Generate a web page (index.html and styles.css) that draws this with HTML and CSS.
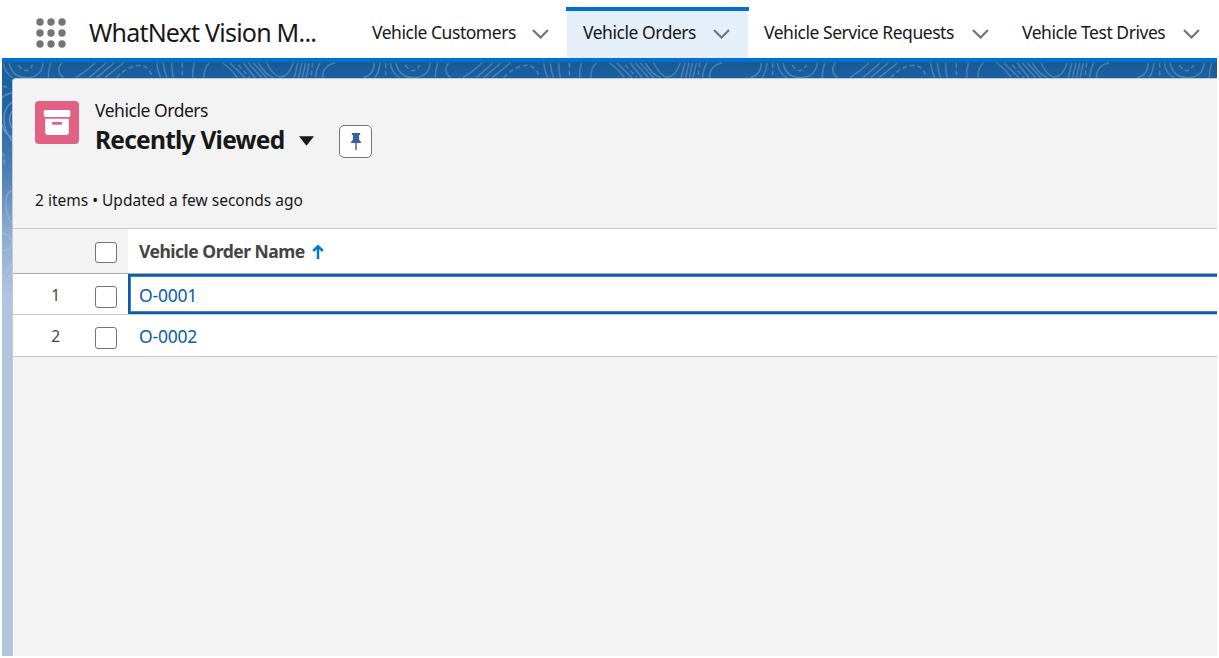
FILE: index.html
```html
<!DOCTYPE html>
<html lang="en">
<head>
<meta charset="utf-8">
<title>Recently Viewed | Vehicle Orders</title>
<link rel="stylesheet" href="styles.css">
</head>
<body>
<div class="app">
  <header class="nav">
    <svg class="waffle" viewBox="0 0 30 30" width="30" height="30">
      <g fill="#747474">
        <circle cx="4" cy="4" r="3.7"/><circle cx="15" cy="4" r="3.7"/><circle cx="26" cy="4" r="3.7"/>
        <circle cx="4" cy="15" r="3.7"/><circle cx="15" cy="15" r="3.7"/><circle cx="26" cy="15" r="3.7"/>
        <circle cx="4" cy="26" r="3.7"/><circle cx="15" cy="26" r="3.7"/><circle cx="26" cy="26" r="3.7"/>
      </g>
    </svg>
    <div class="app-name">WhatNext Vision M...</div>
    <nav class="tabs">
      <a class="tab tab-customers"><span class="tab-label">Vehicle Customers</span><svg class="chev" viewBox="0 0 17 10"><path d="M1 1l7.500 7.500L16 1"/></svg></a>
      <a class="tab tab-orders active"><span class="tab-label">Vehicle Orders</span><svg class="chev" viewBox="0 0 17 10"><path d="M1 1l7.500 7.500L16 1"/></svg></a>
      <a class="tab tab-service"><span class="tab-label">Vehicle Service Requests</span><svg class="chev" viewBox="0 0 17 10"><path d="M1 1l7.500 7.500L16 1"/></svg></a>
      <a class="tab tab-drives"><span class="tab-label">Vehicle Test Drives</span><svg class="chev" viewBox="0 0 17 10"><path d="M1 1l7.500 7.500L16 1"/></svg></a>
    </nav>
  </header>
  <main class="stage">
    <svg class="topo" width="1215" height="260">
      <defs>
        <pattern id="contours" width="1161" height="900" patternUnits="userSpaceOnUse" patternTransform="translate(-2 -7) scale(.33333)">
          <g fill="none" stroke="#8fb4da" stroke-opacity=".4" stroke-width="4.500">
            <path d="M10 24q4 30 28 44M27 24c6 28 24 44 53 44s46-16 50-44M152 24q-7 20-7 44M185 24q-20 22 5 44M228 68q32-20 57-44M268 68l50-44M290 68l52-44M315 68l55-44M470 24q3 26 12 44M490 24q2 26 10 44M515 24q0 24 5 44M583 24q-6 22-5 44M628 24q-18 18-16 44M668 24q26 18 44 44M690 24l45 44M730 24l35 44M745 24l40 44M760 24l40 44M775 24q20 34 45 44M800 24q22 42 43 42t37-42M894 24l-12 44M906 24l-10 44M917 24l-10 44M928 24l-10 44M960 24q-12 18-13 44M1005 24q-38 8-37 44M1122 24q2 34-32 44M1140 24q-2 26-15 44"/>
            <path stroke-dasharray="14 9" d="M55 30q22 34 43 0M350 68q34-36 68-37 28 0 40 37M547 24v44M715 30l35 38M938 24l-5 44M1157 24v44"/>
          </g>
        </pattern>
      </defs>
      <rect width="1215" height="16" fill="url(#contours)"/>
      <g fill="none" stroke="#b5cde8" stroke-opacity=".4" stroke-width="1.500">
        <path d="M0 36q3-4 10-5M10 40Q-3 50 5 71l5 8M10 49q-5 9 0 17M10 75Q2 72 0 62M10 129q-7 1-6 15 1 12 6 17M0 171q9 1 10 9-1 9-10 9M10 202Q3 212 0 216M10 211L0 226M10 222L0 236M10 232l-10 6M10 244q-5 2-10 2"/>
        <path stroke-dasharray="4 3" d="M1 24l7 3M1 91l2 14"/>
      </g>
    </svg>
    <section class="card">
      <div class="card-header">
        <div class="title-row">
          <svg class="object-icon" viewBox="0 0 44 43" width="44" height="43">
            <rect width="44" height="43" rx="4" fill="#e16184"/>
            <rect x="8.800" y="9" width="26.500" height="7" rx="1.500" fill="#fff"/>
            <path fill="#fff" d="M10.200 17.800h23.600v13.400a2.700 2.700 0 0 1-2.700 2.700H12.900a2.700 2.700 0 0 1-2.700-2.700z"/>
            <rect x="17" y="21" width="10.200" height="2.700" rx="1" fill="#e16184"/>
          </svg>
          <div class="titles">
            <div class="object-name">Vehicle Orders</div>
            <h1 class="view-name">Recently Viewed</h1>
          </div>
          <svg class="caret" viewBox="0 0 15 10" width="15" height="10"><path fill="#181818" d="M0 .3h15L7.500 9.700z"/></svg>
          <button class="pin" aria-label="Pin this list view">
            <svg viewBox="0 0 12 18" width="12" height="18"><path fill="#365f9e" d="M2.300 0h7.400q.5 0 .5.500v1q0 .6-.6.600H9.100v4.800q1.700.9 1.900 2.600 0 .5-.6.500H6.700v6.500q0 .7-.7.700t-.7-.7V10H1.600q-.6 0-.6-.5.200-1.700 1.900-2.600V2.100h-.5q-.6 0-.6-.6v-1q0-.5.500-.5z"/></svg>
          </button>
        </div>
        <div class="status">2 items • Updated a few seconds ago</div>
      </div>
      <div class="grid">
        <div class="row head">
          <div class="num"></div>
          <div class="check"><span class="box"></span></div>
          <div class="name"><span class="col-label">Vehicle Order Name</span>
            <svg class="arrow" viewBox="0 0 12 16" width="12" height="16"><path fill="none" stroke="#0176d3" stroke-width="2.500" d="M6 15V2.500M1.200 7 6 2.200 10.800 7"/></svg>
          </div>
        </div>
        <div class="row first">
          <div class="num">1</div>
          <div class="check"><span class="box"></span></div>
          <div class="name focused"><a class="link">O-0001</a></div>
        </div>
        <div class="row">
          <div class="num">2</div>
          <div class="check"><span class="box"></span></div>
          <div class="name"><a class="link">O-0002</a></div>
        </div>
      </div>
    </section>
  </main>
</div>
</body>
</html>
```
FILE: styles.css
```css
* { box-sizing: border-box; }
body { margin: 0; background: #fff; color: #181818; font-family: "Noto Sans", "Open Sans", sans-serif; }
.app { width: 1219px; height: 658px; padding: 0 2px 2px; display: flex; flex-direction: column; overflow: hidden; }
.nav { height: 62px; flex: none; display: flex; border-bottom: 4px solid #0070d2; background: #fff; }
.waffle { margin: 17.500px 0 0 33.500px; flex: none; }
.app-name { width: 261px; margin-left: 23.500px; padding-top: 13px; line-height: 38px; font-size: 25px; letter-spacing: -.78px; white-space: nowrap; flex: none; }
.tabs { display: flex; padding-top: 7px; }
.tab { position: relative; display: flex; justify-content: space-between; padding: 4px 17px 0 16px; flex: none; }
.tab-label { font-size: 17.500px; line-height: 43px; letter-spacing: -.46px; white-space: nowrap; }
.tab-customers { width: 217px; padding: 4px 18px 0 22px; }
.tab-orders { width: 181px; padding-right: 18px; }
.tab-service { width: 258px; }
.tab-drives { width: 211px; }
.tab.active { background: #e5effa; }
.tab.active::before { content: ""; position: absolute; left: -1px; right: -1px; top: 0; height: 4px; background: #0070d2; }
.chev { width: 17px; height: 10px; margin-top: 18px; fill: none; stroke: #747474; stroke-width: 2.200; flex: none; }

.stage { position: relative; flex: 1; padding: 16px 0 0 10px; display: flex; background: linear-gradient(#195a97 0, #1b60a1 16px, #2464a3 50px, #5585bb 120px, #8babd2 170px, #b0c4df 235px); }
.topo { position: absolute; left: 0; top: 0; }
.card { position: relative; flex: 1; background: #f3f3f3; border: 1px solid #c9c9c9; border-width: 1px 0 0 1px; border-top-left-radius: 4px; }
.card-header { height: 149px; padding: 22px 0 0 22px; }
.title-row { display: flex; height: 80px; }
.object-icon { flex: none; }
.titles { width: 220px; padding-left: 16px; white-space: nowrap; flex: none; }
.object-name { font-size: 17.500px; line-height: 19px; letter-spacing: -.46px; }
.view-name { margin: 4px 0 0; font-size: 24.500px; line-height: 32px; font-weight: 700; letter-spacing: -.75px; }
.caret { margin-top: 35px; flex: none; }
.pin { width: 33px; height: 33px; margin: 24px 0 0 25px; padding: 0; display: flex; align-items: center; justify-content: center; background: #fff; border: 1px solid #747474; border-radius: 5px; }
.status { font-size: 15.500px; line-height: 38px; white-space: nowrap; }

.grid { border-top: 1px solid #c9c9c9; }
.row { height: 42px; display: flex; background: #fff; border-bottom: 1px solid #c9c9c9; }
.row.first { height: 41px; }
.row.head { height: 45px; background: linear-gradient(90deg, #f3f3f3 115px, #fff 115px); border-bottom-color: #aeaeae; }
.num { width: 82px; padding-right: 35px; text-align: right; font-size: 15.500px; line-height: 43px; color: #444; }
.check { width: 33px; padding-top: 12px; }
.box { display: block; width: 22px; height: 22px; background: #fff; border: 1px solid #747474; border-radius: 3px; }
.head .box { height: 21px; margin-top: 1px; }
.name { flex: 1; display: flex; padding-left: 11px; font-size: 17.500px; line-height: 43px; white-space: nowrap; }
.head .name { line-height: 45px; }
.col-label { width: 173px; font-weight: 700; color: #444; letter-spacing: -.5px; }
.arrow { margin-top: 15px; }
.link { color: #0b5cab; letter-spacing: -.2px; }
.focused { border: 2px solid #0b5cab; border-right: 0; box-shadow: inset 1px 1px #4581c2, inset 0 -1px #4581c2; padding-left: 9px; line-height: 39px; }
```
